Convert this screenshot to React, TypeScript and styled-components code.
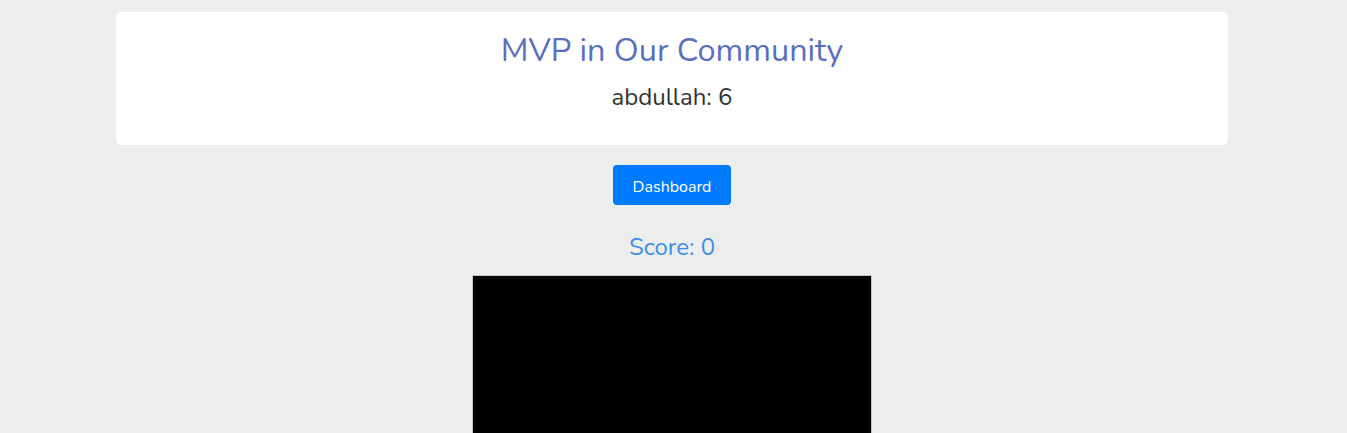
import React from "react";
import styled, { createGlobalStyle } from "styled-components";

const Global = createGlobalStyle`
  html, body { margin: 0; padding: 0; background: #ededed; }
  body { font-family: "Nunito", "Lato", "Noto Sans", sans-serif; overflow: hidden; }
`;

const Page = styled.div`
  width: 1344px;
  display: flex;
  flex-direction: column;
  align-items: center;
  padding-top: 12px;
`;

const Card = styled.div`
  width: 1112px;
  height: 133px;
  box-sizing: border-box;
  background: #fff;
  border-radius: 5px;
  display: flex;
  flex-direction: column;
  align-items: center;
  padding-top: 18px;
`;

const Title = styled.h1`
  margin: 0;
  font-size: 32.4px;
  font-weight: 400;
  line-height: 40px;
  color: #5a6ebf;
`;

const Mvp = styled.div`
  margin-top: 11px;
  font-size: 24px;
  line-height: 32px;
  color: #333;
`;

const Button = styled.button`
  margin-top: 20px;
  width: 118px;
  height: 40px;
  padding: 4px 0 0;
  border: none;
  border-radius: 4px;
  background: #007bff;
  color: #fff;
  font-family: inherit;
  font-size: 16px;
  cursor: pointer;
`;

const Score = styled.div`
  margin-top: 27px;
  font-size: 24px;
  line-height: 30px;
  color: #3a90e8;
`;

const Board = styled.div`
  margin-top: 13px;
  width: 400px;
  height: 400px;
  box-sizing: border-box;
  background: #000;
  border: 1px solid #c8c8c8;
`;

export default function App() {
  return (
    <>
      <Global />
      <Page>
        <Card>
          <Title>MVP in Our Community</Title>
          <Mvp>abdullah: 6</Mvp>
        </Card>
        <Button>Dashboard</Button>
        <Score>Score: 0</Score>
        <Board />
      </Page>
    </>
  );
}
